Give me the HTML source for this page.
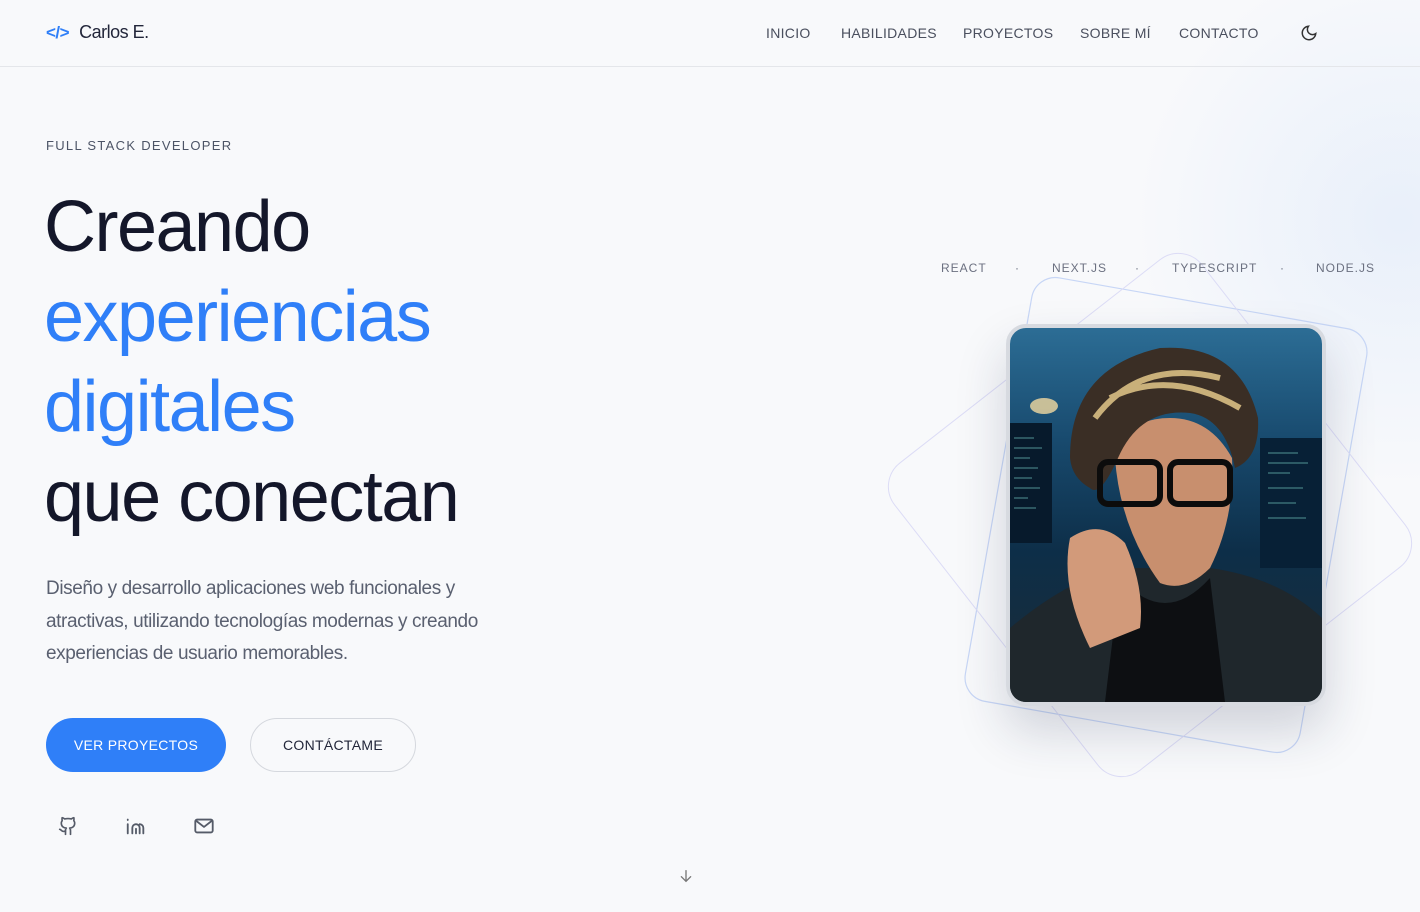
<!DOCTYPE html>
<html><head><meta charset="utf-8"><style>
*{margin:0;padding:0;box-sizing:border-box}
body{width:1420px;height:912px;overflow:hidden;background:#f8f9fb;font-family:"Liberation Sans",sans-serif;color:#1a1d2b;position:relative}
.glow{position:absolute;right:-260px;top:-40px;width:560px;height:520px;border-radius:50%;background:radial-gradient(circle,rgba(220,232,250,.55),rgba(248,249,251,0) 70%)}
header{position:absolute;left:0;top:0;width:1420px;height:67px;border-bottom:1px solid #e4e6ea}
.logo{position:absolute;left:46px;top:22px;font-size:18px;color:#22263a;letter-spacing:-.5px}
.logo b{color:#2f7ff8;font-weight:700;margin-right:10px;font-size:17px}
nav a{position:absolute;top:25px;font-size:14px;color:#4a4f5e;letter-spacing:.3px;text-decoration:none}
.sub{position:absolute;left:46px;top:138px;font-size:13px;letter-spacing:1.3px;color:#4c5466}
h1{position:absolute;left:44px;top:182px;font-weight:400;font-size:72px;line-height:90px;letter-spacing:-1.5px;color:#14172a}
h1 span{color:#2f7ff8}
p.d{position:absolute;left:46px;top:573px;width:480px;font-size:19px;line-height:32.5px;color:#5a6070;letter-spacing:-.4px}
.b1{position:absolute;left:46px;top:718px;width:180px;height:54px;border-radius:27px;background:#2f7ff8;color:#fff;font-size:14px;letter-spacing:.3px;text-align:center;line-height:54px}
.b2{position:absolute;left:250px;top:718px;width:166px;height:54px;border-radius:27px;border:1px solid #d5d8de;color:#22263a;font-size:14px;letter-spacing:.3px;text-align:center;line-height:52px}
.ic{position:absolute;top:815px}
.tags span{position:absolute;top:261px;font-size:12px;letter-spacing:1px;color:#6b7080}
.photo{position:absolute;left:1006px;top:324px;width:320px;height:382px;border-radius:20px;border:4px solid #d7dae0;overflow:hidden;box-shadow:0 25px 50px rgba(30,40,70,.18);background:linear-gradient(180deg,#2c6d95 0%,#184a6e 30%,#0d2e48 60%,#1c2b36 100%)}
</style></head><body>
<div class="glow"></div>
<svg style="position:absolute;left:0;top:0" width="1420" height="912">
<rect x="996" y="300" width="340" height="430" rx="24" fill="none" stroke="#c7d6f6" stroke-width="1.2" transform="rotate(10 1166 515)"/>
<rect x="955" y="320" width="390" height="390" rx="30" fill="none" stroke="#dcdcf6" stroke-width="1" transform="rotate(-38 1150 515)"/>
</svg>
<header>
<div class="logo"><b>&lt;/&gt;</b>Carlos E.</div>
<nav><a style="left:766px">INICIO</a><a style="left:841px">HABILIDADES</a><a style="left:963px">PROYECTOS</a><a style="left:1080px">SOBRE MÍ</a><a style="left:1179px">CONTACTO</a></nav>
<svg style="position:absolute;left:1300px;top:24px" width="18" height="18" viewBox="0 0 24 24" fill="none" stroke="#333" stroke-width="2" stroke-linecap="round"><path d="M21 12.8A9 9 0 1 1 11.2 3a7 7 0 0 0 9.8 9.8z"/></svg>
</header>
<div class="sub">FULL STACK DEVELOPER</div>
<h1>Creando<br><span>experiencias<br>digitales</span><br>que conectan</h1>
<p class="d">Diseño y desarrollo aplicaciones web funcionales y atractivas, utilizando tecnologías modernas y creando experiencias de usuario memorables.</p>
<div class="b1">VER PROYECTOS</div>
<div class="b2">CONTÁCTAME</div>
<svg class="ic" style="left:58px" width="20" height="22" viewBox="0 0 24 24" fill="none" stroke="#555b68" stroke-width="2" stroke-linecap="round" stroke-linejoin="round"><path d="M15 22v-4a4.8 4.8 0 0 0-1-3.5c3 0 6-2 6-5.5.08-1.25-.27-2.48-1-3.5.28-1.150.28-2.35 0-3.5 0 0-1 0-3 1.5-2.64-.5-5.36-.5-8 0C6 2 5 2 5 2c-.3 1.15-.3 2.35 0 3.5A5.4 5.4 0 0 0 4 9c0 3.5 3 5.5 6 5.5-.39.49-.68 1.05-.85 1.65-.17.6-.22 1.23-.15 1.85v4"/><path d="M9 18c-4.5 2-5-2-7-2"/></svg>
<svg class="ic" style="left:125px" width="22" height="22" viewBox="0 0 24 24" fill="none" stroke="#555b68" stroke-width="2" stroke-linecap="round"><path d="M3 10v10M3 5v.5M8 20v-6a4 4 0 0 1 8 0v6M12 20v-5M20 20v-6a4 4 0 0 0-4-4"/></svg>
<svg class="ic" style="left:193px" width="22" height="22" viewBox="0 0 24 24" fill="none" stroke="#555b68" stroke-width="2" stroke-linejoin="round"><rect x="2.5" y="5" width="19" height="14" rx="2"/><path d="M3 6l9 7 9-7"/></svg>
<svg style="position:absolute;left:678px;top:868px" width="16" height="16" viewBox="0 0 24 24" fill="none" stroke="#777" stroke-width="2" stroke-linecap="round"><path d="M12 4v16M5 13l7 7 7-7"/></svg>
<div class="tags"><span style="left:941px">REACT</span><span style="left:1015px">·</span><span style="left:1052px">NEXT.JS</span><span style="left:1135px">·</span><span style="left:1172px">TYPESCRIPT</span><span style="left:1280px">·</span><span style="left:1316px">NODE.JS</span></div>
<div class="photo">
<svg width="312" height="374" viewBox="0 0 312 374">
<rect x="0" y="95" width="42" height="120" fill="#071a2c"/><rect x="250" y="110" width="62" height="130" fill="#072036"/>
<g stroke="#5aa0a0" stroke-width="1.5" opacity=".6"><path d="M4 110h20M4 120h28M4 130h16M4 140h24M4 150h18M4 160h26M4 170h14M4 180h22M258 125h30M258 135h40M258 145h22M258 160h35M258 175h28M258 190h38"/></g>
<ellipse cx="34" cy="78" rx="14" ry="8" fill="#f3d9a0" opacity=".8"/>
<path d="M0 300 Q60 250 110 240 L200 240 Q270 250 312 290 V374 H0Z" fill="#1f272c"/>
<path d="M110 250 Q155 300 200 250 L215 374 H95Z" fill="#0d0f12"/>
<path d="M105 130 Q110 200 150 255 Q175 265 200 240 Q225 190 222 130 Q200 90 160 90 Q115 90 105 130Z" fill="#c88f6e"/>
<path d="M60 130 Q60 40 150 20 Q230 15 248 90 Q250 130 225 140 Q215 90 180 85 Q130 80 108 130 Q90 170 80 160 Q62 150 60 130Z" fill="#3a2e25"/>
<path d="M85 90 Q130 30 210 50 M100 70 Q160 40 230 80" stroke="#c9b07a" stroke-width="6" fill="none"/>
<rect x="90" y="134" width="60" height="42" rx="8" fill="none" stroke="#0c0c0c" stroke-width="6"/>
<rect x="160" y="134" width="60" height="42" rx="8" fill="none" stroke="#0c0c0c" stroke-width="6"/>
<path d="M60 210 Q90 190 115 215 Q135 260 130 300 L80 320 Q50 260 60 210Z" fill="#d29a7a"/>
</svg>
</div>
</body></html>
